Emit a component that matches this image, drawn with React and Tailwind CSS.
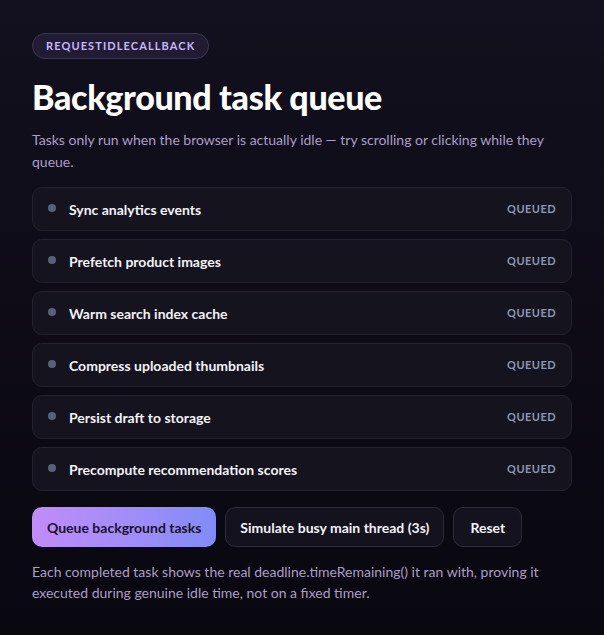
import React from 'react';

const tasks = [
  'Sync analytics events',
  'Prefetch product images',
  'Warm search index cache',
  'Compress uploaded thumbnails',
  'Persist draft to storage',
  'Precompute recommendation scores'
];

const TaskRow = ({ label }) => (
  <div className="flex items-center h-[44px] px-[15px] rounded-[10px] border border-[#24212f] bg-[#15131e]">
    <span className="w-[8px] h-[8px] rounded-full bg-[#5b5f7c] mr-[13px] -mt-[2px]" />
    <span className="flex-1 text-[14px] font-bold text-[#f3f2f8]">{label}</span>
    <span className="text-[11px] font-bold tracking-[0.04em] text-[#8e97b3]">QUEUED</span>
  </div>
);

const App = () => {
  return (
    <div
      className="min-h-[635px] w-full bg-gradient-to-b from-[#13101f] to-[#09070f] px-[32px] pt-[32px] pb-[30px]"
      style={{ fontFamily: 'Lato, "Noto Sans", sans-serif' }}
    >
      <div className="inline-flex items-center h-[26px] px-[13px] rounded-full border border-[#3b3552] bg-[#211c33] text-[11px] font-bold tracking-[0.1em] text-[#c7b8fb]">
        REQUESTIDLECALLBACK
      </div>
      <h1 className="mt-[18px] text-[34px] leading-[40px] font-black tracking-[-0.01em] text-white">
        Background task queue
      </h1>
      <p className="mt-[12px] text-[14px] leading-[22px] text-[#a99fc6]">
        Tasks only run when the browser is actually idle — try scrolling or clicking while they queue.
      </p>
      <div className="mt-[14px] flex flex-col gap-[8px]">
        {tasks.map((t) => (
          <TaskRow key={t} label={t} />
        ))}
      </div>
      <div className="mt-[16px] flex gap-[9px]">
        <button className="h-[40px] px-[15px] whitespace-nowrap rounded-[10px] bg-gradient-to-r from-[#c18cf8] to-[#818cf8] text-[14px] font-bold text-[#1a1030]">
          Queue background tasks
        </button>
        <button className="h-[40px] px-[14px] whitespace-nowrap rounded-[10px] border border-[#2e2b3a] bg-[#14121c] text-[14px] font-bold text-[#f3f2f8]">
          Simulate busy main thread (3s)
        </button>
        <button className="h-[40px] px-[16px] whitespace-nowrap rounded-[10px] border border-[#2e2b3a] bg-[#14121c] text-[14px] font-bold text-[#f3f2f8]">
          Reset
        </button>
      </div>
      <p className="mt-[14px] text-[14px] leading-[21px] text-[#a99fc6] pr-[30px]">
        Each completed task shows the real deadline.timeRemaining() it ran with, proving it executed during genuine idle time, not on a fixed timer.
      </p>
    </div>
  );
};

export default App;
